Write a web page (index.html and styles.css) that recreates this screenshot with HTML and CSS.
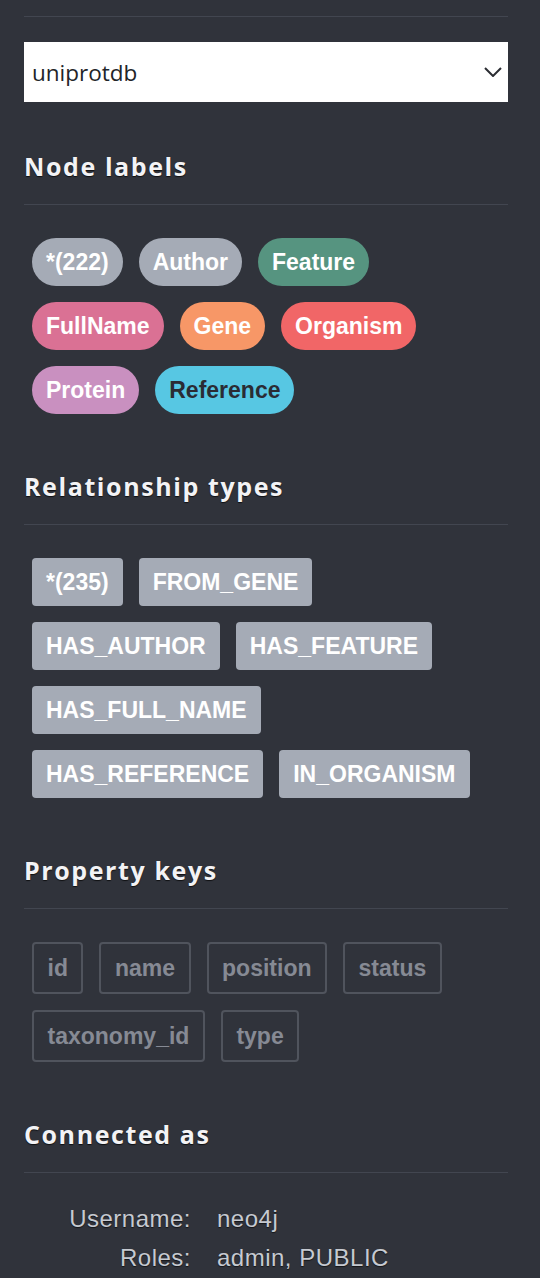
FILE: index.html
```html
<!DOCTYPE html>
<html>
<head>
<meta charset="utf-8">
<link rel="stylesheet" href="styles.css">
</head>
<body>
<div class="drawer">
  <div class="top-rule"></div>
  <div class="db-select">
    <span class="db-name">uniprotdb</span>
    <svg class="chevron" width="18" height="10" viewBox="0 0 18 10"><path d="M1 1 L9 9 L17 1" fill="none" stroke="#2b2d33" stroke-width="2"/></svg>
  </div>

  <section class="section">
    <h3 class="heading">Node labels</h3>
    <div class="tags">
      <span class="tag pill gray">*(222)</span>
      <span class="tag pill gray">Author</span>
      <span class="tag pill green">Feature</span>
      <span class="tag pill pink">FullName</span>
      <span class="tag pill orange">Gene</span>
      <span class="tag pill red">Organism</span>
      <span class="tag pill purple">Protein</span>
      <span class="tag pill blue">Reference</span>
    </div>
  </section>

  <section class="section">
    <h3 class="heading">Relationship types</h3>
    <div class="tags">
      <span class="tag rel">*(235)</span>
      <span class="tag rel">FROM_GENE</span>
      <span class="tag rel">HAS_AUTHOR</span>
      <span class="tag rel">HAS_FEATURE</span>
      <span class="tag rel">HAS_FULL_NAME</span>
      <span class="tag rel">HAS_REFERENCE</span>
      <span class="tag rel">IN_ORGANISM</span>
    </div>
  </section>

  <section class="section">
    <h3 class="heading">Property keys</h3>
    <div class="tags">
      <span class="tag prop">id</span>
      <span class="tag prop">name</span>
      <span class="tag prop">position</span>
      <span class="tag prop">status</span>
      <span class="tag prop">taxonomy_id</span>
      <span class="tag prop">type</span>
    </div>
  </section>

  <section class="section">
    <h3 class="heading">Connected as</h3>
    <div class="info">
      <span class="info-key">Username:</span><span class="info-val">neo4j</span>
      <span class="info-key">Roles:</span><span class="info-val">admin, PUBLIC</span>
    </div>
  </section>
</div>
</body>
</html>
```

FILE: styles.css
```css
html, body {
  margin: 0;
  padding: 0;
  background: #30333b;
}

.drawer {
  width: 484px;
  padding: 16px 32px 0 24px;
}

.top-rule {
  height: 1px;
  background: #424650;
}

.db-select {
  margin-top: 25px;
  height: 60px;
  background: #ffffff;
  display: flex;
  align-items: center;
  justify-content: space-between;
  padding: 0 6px 0 8px;
}

.db-name {
  font-family: "Open Sans", sans-serif;
  font-size: 22.5px;
  color: #222428;
}

.chevron {
  display: block;
}

.section {
  margin-top: 49px;
}

.section + .section {
  margin-top: 57px;
}

.heading {
  margin: 0;
  font-family: "Open Sans", sans-serif;
  font-weight: 700;
  font-size: 25px;
  line-height: 30px;
  letter-spacing: 1.6px;
  color: #f3f3f5;
  text-shadow: 0 1px 1px rgba(0, 0, 0, 0.7);
  padding-bottom: 23px;
  border-bottom: 1px solid #424650;
}

.tags {
  display: flex;
  flex-wrap: wrap;
  gap: 16px;
  padding: 33px 24px 0 8px;
}

.tag {
  font-family: "Liberation Sans", Arial, sans-serif;
  font-weight: 700;
  font-size: 23px;
  height: 48px;
  line-height: 48px;
  padding: 0 14px;
  color: #ffffff;
  box-sizing: border-box;
}

.pill {
  border-radius: 24px;
}

.gray { background: #a5abb6; }
.green { background: #569480; }
.pink { background: #da7194; }
.orange { background: #f79767; }
.red { background: #f16667; }
.purple { background: #c990c0; }
.blue { background: #57c7e3; color: #2a2c34; }

.rel {
  background: #a5abb6;
  border-radius: 4px;
}

.prop {
  height: 52px;
  line-height: 48px;
  border: 2px solid #50545d;
  border-radius: 4px;
  color: #868a94;
  padding: 0 13.5px;
}

.info {
  display: grid;
  grid-template-columns: 167px auto;
  column-gap: 26px;
  padding-top: 26px;
  font-family: "Liberation Sans", Arial, sans-serif;
  font-size: 24px;
  letter-spacing: 0.5px;
  line-height: 39px;
  color: #c6cad1;
  text-shadow: 0 1px 1px rgba(0, 0, 0, 0.6);
}

.info-key {
  text-align: right;
}
```
